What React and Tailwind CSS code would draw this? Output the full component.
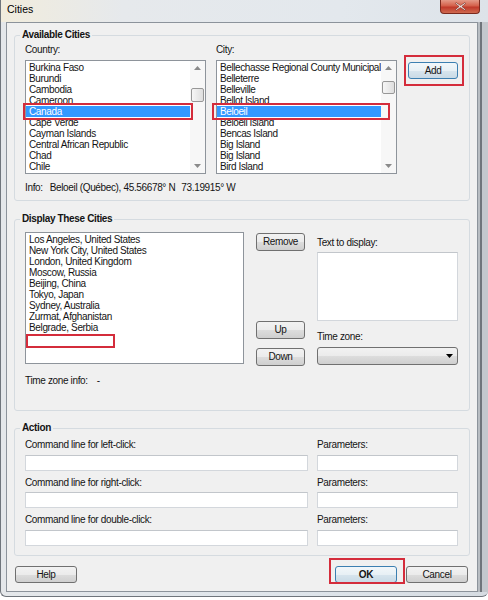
import React from 'react';

function Btn({ children, className = '', focused = false, bold = false }) {
  return (
    <div
      className={`flex items-center justify-center rounded-[3px] border leading-none ${
        focused
          ? 'border-[#3c7fb1] bg-[linear-gradient(#f2f7fa,#e8f0f5_50%,#d8e5ee_50%,#c9dae6)]'
          : 'border-[#707070] bg-[linear-gradient(#f2f2f2,#ebebeb_50%,#dddddd_50%,#cfcfcf)]'
      } ${bold ? 'font-bold' : ''} ${className}`}
    >
      {children}
    </div>
  );
}

function Up() {
  return (
    <svg width="7" height="4" viewBox="0 0 7 4">
      <path d="M0 4L3.5 0L7 4Z" fill="#8a8a8a" />
    </svg>
  );
}
function Down({ color = '#8a8a8a' }) {
  return (
    <svg width="7" height="4" viewBox="0 0 7 4">
      <path d="M0 0L3.5 4L7 0Z" fill={color} />
    </svg>
  );
}

function ScrollBar({ thumbClass }) {
  return (
    <div className="w-[15px] flex flex-col bg-[#f7f7f7]">
      <div className="h-[14px] flex items-center justify-center">
        <Up />
      </div>
      <div className="flex-1">
        <div
          className={`mx-[1px] rounded-[2px] border border-[#979797] bg-[linear-gradient(90deg,#f6f6f6,#dedede)] ${thumbClass}`}
        />
      </div>
      <div className="h-[14px] flex items-center justify-center">
        <Down />
      </div>
    </div>
  );
}

function ListBox({ items, selected, thumbClass, className = '', children }) {
  return (
    <div className={`relative flex border border-[#8e949b] bg-white ${className}`}>
      <div className="flex-1 min-w-0 overflow-hidden pt-[1px]">
        {items.map((t, i) => (
          <div
            key={i}
            className={`h-[11px] leading-[11px] pl-[3px] whitespace-nowrap ${
              i === selected ? 'bg-[#3399ff] text-white' : ''
            }`}
          >
            {t}
          </div>
        ))}
      </div>
      <ScrollBar thumbClass={thumbClass} />
      {children}
    </div>
  );
}

function Group({ title, className = '', children }) {
  return (
    <fieldset className={`border border-[#d5dbe0] rounded-[3px] px-[10px] ${className}`}>
      <legend className="-ml-[5px] px-[2px] font-bold leading-[12px]">{title}</legend>
      {children}
    </fieldset>
  );
}

function Label({ children, className = '' }) {
  return <div className={`h-[12px] leading-[12px] whitespace-nowrap ${className}`}>{children}</div>;
}

function Input({ className = '' }) {
  return <div className={`bg-white border border-[#d3d7dc] border-t-[#c2c6cb] ${className}`} />;
}

const countries = [
  'Burkina Faso',
  'Burundi',
  'Cambodia',
  'Cameroon',
  'Canada',
  'Cape Verde',
  'Cayman Islands',
  'Central African Republic',
  'Chad',
  'Chile',
];
const cities = [
  'Bellechasse Regional County Municipal',
  'Belleterre',
  'Belleville',
  'Bellot Island',
  'Beloeil',
  'Beloeil Island',
  'Bencas Island',
  'Big Island',
  'Big Island',
  'Bird Island',
];
const display = [
  'Los Angeles, United States',
  'New York City, United States',
  'London, United Kingdom',
  'Moscow, Russia',
  'Beijing, China',
  'Tokyo, Japan',
  'Sydney, Australia',
  'Zurmat, Afghanistan',
  'Belgrade, Serbia',
];

export default function App() {
  return (
    <div className="w-[488px] h-[600px] bg-white overflow-hidden font-['Liberation_Sans',Arial,sans-serif] text-[10px] tracking-[-0.35px] text-[#141414]">
      <div className="w-[488px] h-[597px] flex flex-col border-l border-b border-[#6f757c] rounded-b-[6px] overflow-hidden bg-[linear-gradient(90deg,#e4e7ea,#dfe5eb_60%,#d6dce2)]">
        {/* Title bar */}
        <div className="h-[22px] flex items-start justify-between bg-[linear-gradient(90deg,#f1ecdd,#e6e9ec_25%,#e3e8ed_70%,#dde3e9)]">
          <div className="pl-[6px] pt-[3px] text-[10.5px] tracking-normal leading-[12px] text-black">Cities</div>
          <div className="mr-[8px] w-[40px] h-[14px] flex items-center justify-center rounded-b-[4px] border border-t-0 border-[#7b2a1e] bg-[linear-gradient(#e49a88,#d4604a_45%,#c0392a_55%,#cf6a50)]">
            <svg width="11" height="9" viewBox="0 0 11 9">
              <path
                d="M1 0.5L5.5 3.6L10 0.5L10.5 1.6L6.8 4.5L10.5 7.4L10 8.5L5.5 5.4L1 8.5L0.5 7.4L4.2 4.5L0.5 1.6Z"
                fill="#ffffff"
                stroke="#6b2418"
                strokeWidth="0.6"
              />
            </svg>
          </div>
        </div>

        {/* Body */}
        <div className="h-[570px] flex">
          <div className="w-[5px]" />
          <div className="w-[472px] h-[570px] border border-[#8c939b] bg-[#f0f0f0] px-[7px]">
            {/* Available Cities */}
            <Group title="Available Cities" className="mt-[6px] pb-[6px]">
              <div className="pt-[3px] flex">
                <div className="w-[181px]">
                  <Label>Country:</Label>
                  <ListBox
                    items={countries}
                    selected={4}
                    thumbClass="mt-[13px] h-[14px]"
                    className="mt-[4px] w-[181px] h-[114px]"
                  >
                    <div className="absolute left-[-3px] top-[42px] w-[170px] h-[17px] border-2 border-[#d42c3b]" />
                  </ListBox>
                </div>
                <div className="w-[181px] ml-[10px]">
                  <Label>City:</Label>
                  <ListBox
                    items={cities}
                    selected={4}
                    thumbClass="mt-[6px] h-[13px]"
                    className="mt-[4px] w-[181px] h-[114px] tracking-[-0.4px]"
                  >
                    <div className="absolute left-[-5px] top-[42px] w-[178px] h-[17px] border-2 border-[#d42c3b]" />
                  </ListBox>
                </div>
                <div className="ml-[11px] pt-[18px]">
                  <div className="relative w-[50px] h-[17px]">
                    <Btn focused className="w-[50px] h-[17px]">Add</Btn>
                    <div className="absolute left-[-4px] top-[-7px] w-[60px] h-[31px] border-2 border-[#d42c3b]" />
                  </div>
                </div>
              </div>
              <Label className="mt-[8px] flex">
                <span>Info:</span>
                <span className="ml-[7px]">Beloeil (Québec), 45.56678° N</span>
                <span className="ml-[6px]">73.19915° W</span>
              </Label>
            </Group>

            {/* Display These Cities */}
            <Group title="Display These Cities" className="mt-[12px] pb-[23px]">
              <div className="mt-[7px] flex">
                <div className="relative w-[219px] h-[132px] border border-[#8e949b] bg-white pt-[1px]">
                  {display.map((t, i) => (
                    <div key={i} className="h-[11px] leading-[11px] pl-[3px] whitespace-nowrap">
                      {t}
                    </div>
                  ))}
                  <div className="absolute left-0 top-[101px] w-[89px] h-[14px] border-2 border-[#d42c3b]" />
                </div>
                <div className="ml-[12px] w-[49px] flex flex-col">
                  <Btn className="mt-[1px] h-[18px]">Remove</Btn>
                  <Btn className="mt-[70px] h-[18px]">Up</Btn>
                  <Btn className="mt-[9px] h-[18px]">Down</Btn>
                </div>
                <div className="ml-[12px] w-[141px]">
                  <Label className="mt-[5px]">Text to display:</Label>
                  <Input className="mt-[3px] h-[69px]" />
                  <Label className="mt-[10px]">Time zone:</Label>
                  <div className="mt-[4px] h-[18px] flex items-center justify-end pr-[4px] rounded-[3px] border border-[#707070] bg-[linear-gradient(#f2f2f2,#ebebeb_50%,#dddddd_50%,#cfcfcf)]">
                    <Down color="#000000" />
                  </div>
                </div>
              </div>
              <Label className="mt-[9px] flex">
                <span>Time zone info:</span>
                <span className="ml-[9px]">-</span>
              </Label>
            </Group>

            {/* Action */}
            <Group title="Action" className="mt-[11px] pb-[9px]">
              <div className="flex">
                <div className="w-[283px]">
                  <Label className="mt-[5px]">Command line for left-click:</Label>
                  <Input className="mt-[4px] h-[16px]" />
                  <Label className="mt-[6px]">Command line for right-click:</Label>
                  <Input className="mt-[3px] h-[16px]" />
                  <Label className="mt-[6px]">Command line for double-click:</Label>
                  <Input className="mt-[4px] h-[16px]" />
                </div>
                <div className="ml-[9px] w-[141px]">
                  <Label className="mt-[5px]">Parameters:</Label>
                  <Input className="mt-[4px] h-[16px]" />
                  <Label className="mt-[6px]">Parameters:</Label>
                  <Input className="mt-[3px] h-[16px]" />
                  <Label className="mt-[6px]">Parameters:</Label>
                  <Input className="mt-[4px] h-[16px]" />
                </div>
              </div>
            </Group>

            {/* Bottom buttons */}
            <div className="mt-[10px] flex">
              <Btn className="ml-[1px] w-[62px] h-[17px]">Help</Btn>
              <div className="flex-1" />
              <div className="relative w-[62px] h-[17px]">
                <Btn focused bold className="w-[62px] h-[17px]">OK</Btn>
                <div className="absolute left-[-6px] top-[-8px] w-[76px] h-[26px] border-2 border-[#d42c3b]" />
              </div>
              <Btn className="ml-[9px] mr-[2px] w-[62px] h-[17px]">Cancel</Btn>
            </div>
          </div>
          <div className="w-[10px] flex">
            <div className="w-[2px] bg-[#b8bdc2]" />
            <div className="w-[2px] bg-[#6f757b]" />
            <div className="flex-1 bg-[#c3c8cd]" />
          </div>
        </div>
        <div className="flex-1" />
      </div>
    </div>
  );
}
